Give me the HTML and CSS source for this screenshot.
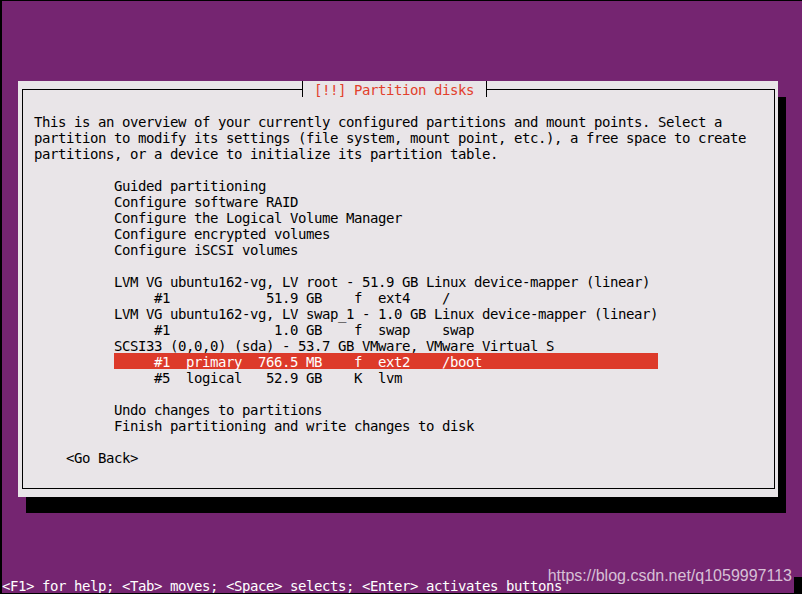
FILE: index.html
```html
<!DOCTYPE html>
<html lang="en">
<head>
    <meta charset="UTF-8">
    <meta name="viewport" content="width=device-width, initial-scale=1.0">
    <title>Partition disks</title>
    <link rel="stylesheet" href="styles.css">
</head>
<body>

    <!-- Dialog -->
    <div class="dialog">
        <div class="frame">
            <div class="title row">[!!] Partition disks</div>

            <div class="intro">
                <div class="row">This is an overview of your currently configured partitions and mount points. Select a</div>
                <div class="row">partition to modify its settings (file system, mount point, etc.), a free space to create</div>
                <div class="row">partitions, or a device to initialize its partition table.</div>
            </div>

            <div class="menu">
                <div class="row">Guided partitioning</div>
                <div class="row">Configure software RAID</div>
                <div class="row">Configure the Logical Volume Manager</div>
                <div class="row">Configure encrypted volumes</div>
                <div class="row">Configure iSCSI volumes</div>
            </div>

            <div class="menu">
                <div class="row">LVM VG ubuntu162-vg, LV root - 51.9 GB Linux device-mapper (linear)</div>
                <div class="row">     #1            51.9 GB    f  ext4    /</div>
                <div class="row">LVM VG ubuntu162-vg, LV swap_1 - 1.0 GB Linux device-mapper (linear)</div>
                <div class="row">     #1             1.0 GB    f  swap    swap</div>
                <div class="row">SCSI33 (0,0,0) (sda) - 53.7 GB VMware, VMware Virtual S</div>
                <div class="row selected">     #1  primary  766.5 MB    f  ext2    /boot</div>
                <div class="row">     #5  logical   52.9 GB    K  lvm</div>
            </div>

            <div class="menu">
                <div class="row">Undo changes to partitions</div>
                <div class="row">Finish partitioning and write changes to disk</div>
            </div>

            <div class="go-back row">&lt;Go Back&gt;</div>
        </div>
    </div>

    <!-- Footer -->
    <footer>
        <span class="row">&lt;F1&gt; for help; &lt;Tab&gt; moves; &lt;Space&gt; selects; &lt;Enter&gt; activates buttons</span>
        <span class="cursor"></span>
    </footer>

    <div class="watermark">https://blog.csdn.net/q1059997113</div>

</body>
</html>
```

FILE: styles.css
```css
body {
    margin: 0;
    height: 592px;
    background: #752571;
    border-left: 2px solid #000;
    border-top: 1px solid #000;
    border-bottom: 1px solid #000;
    font-family: "DejaVu Sans Mono", monospace;
    font-size: 14px;
    letter-spacing: -0.43px;
    line-height: 16px;
    color: #000;
    position: relative;
    overflow: hidden;
}

/* one text cell row: glyphs sit a bit low like the console font */
.row {
    display: block;
    height: 16px;
    box-sizing: border-box;
    padding-top: 1px;
    white-space: pre;
}

/* Dialog */
.dialog {
    margin: 80px 0 0 16px;
    width: 760px;
    height: 416px;
    box-sizing: border-box;
    padding: 8px 3px 8px 4px;
    background: #e9e5e8;
    box-shadow: 8px 16px 0 #000;
}
.frame {
    position: relative;
    height: 100%;
    box-sizing: border-box;
    border: 1px solid #000;
    padding: 23px 0 0 11px;
}
.title {
    position: absolute;
    top: -9px;
    left: 279px;
    padding: 1px 12px 0 11px;
    border-left: 1px solid #000;
    border-right: 1px solid #000;
    background: #e9e5e8;
    color: #e2402c;
}

/* Menu */
.menu {
    margin: 16px 0 0 80px;
    width: 544px;
}
.selected {
    background: #dd3a2a;
    color: #fff;
}

.go-back {
    margin: 16px 0 0 32px;
}

/* Footer */
footer {
    margin-top: 80px;
    height: 16px;
    display: flex;
    justify-content: space-between;
    color: #fff;
}
.cursor {
    width: 8px;
    height: 16px;
    background: #000;
}

.watermark {
    position: absolute;
    right: 10px;
    top: 566px;
    font-family: "Liberation Sans", Arial, sans-serif;
    font-size: 16px;
    letter-spacing: 0;
    line-height: 18px;
    color: rgba(255, 255, 255, 0.72);
}
```
